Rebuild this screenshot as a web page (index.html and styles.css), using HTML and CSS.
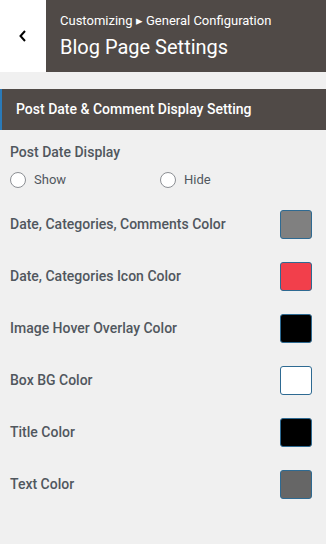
FILE: index.html
```html
<!DOCTYPE html>
<html lang="en">
<head>
    <meta charset="UTF-8">
    <meta name="viewport" content="width=device-width, initial-scale=1.0">
    <title>Blog Page Settings</title>
    <link rel="stylesheet" href="styles.css">
</head>
<body>
    <div class="panel-header">
        <button class="back-btn" type="button">
            <svg width="12" height="14" viewBox="0 0 12 14"><path d="M8 2 L3.5 7 L8 12" fill="none" stroke="#000" stroke-width="2"/></svg>
        </button>
        <div class="panel-title">
            <div class="crumb">Customizing &#9656; General Configuration</div>
            <h1>Blog Page Settings</h1>
        </div>
    </div>

    <div class="section-title">Post Date &amp; Comment Display Setting</div>

    <div class="controls">
        <div class="control">
            <div class="control-label">Post Date Display</div>
            <div class="radio-row">
                <label class="radio"><span class="circle"></span>Show</label>
                <label class="radio"><span class="circle"></span>Hide</label>
            </div>
        </div>
        <div class="color-row">
            <span>Date, Categories, Comments Color</span>
            <span class="swatch" style="background:#808080"></span>
        </div>
        <div class="color-row">
            <span>Date, Categories Icon Color</span>
            <span class="swatch" style="background:#f23f4b"></span>
        </div>
        <div class="color-row">
            <span>Image Hover Overlay Color</span>
            <span class="swatch" style="background:#000000"></span>
        </div>
        <div class="color-row">
            <span>Box BG Color</span>
            <span class="swatch" style="background:#ffffff"></span>
        </div>
        <div class="color-row">
            <span>Title Color</span>
            <span class="swatch" style="background:#000000"></span>
        </div>
        <div class="color-row">
            <span>Text Color</span>
            <span class="swatch" style="background:#666666"></span>
        </div>
    </div>
</body>
</html>
```

FILE: styles.css
```css
body {
    margin: 0;
    font-family: Roboto, "Noto Sans", sans-serif;
    background-color: #f0f0f0;
    color: #50575e;
    width: 326px;
    height: 544px;
    overflow: hidden;
}

.panel-header {
    display: flex;
    height: 72px;
}

    .panel-header .back-btn {
        width: 46px;
        border: none;
        background-color: #fff;
        display: flex;
        align-items: center;
        justify-content: center;
        padding: 0;
        padding-bottom: 1px;
    }

    .panel-header .panel-title {
        flex: 1;
        background-color: #504a47;
        color: #fff;
        padding: 13px 0 0 14px;
    }

    .panel-title .crumb {
        font-size: 13px;
        line-height: 16px;
    }

    .panel-title h1 {
        margin: 6px 0 0;
        font-size: 20px;
        font-weight: 400;
        line-height: 24px;
    }

.section-title {
    margin-top: 17px;
    height: 41px;
    box-sizing: border-box;
    background-color: #504a47;
    border-left: 2px solid #2a7ab8;
    color: #fff;
    font-size: 14px;
    font-weight: 500;
    line-height: 41px;
    padding-left: 14px;
}

.controls {
    padding: 13px 14px 0 10px;
}

.control {
    margin-bottom: 10px;
}

.control-label {
    font-size: 14px;
    font-weight: 500;
    line-height: 18px;
}

.radio-row {
    display: flex;
    margin-top: 11px;
}

    .radio-row .radio {
        width: 150px;
        display: flex;
        align-items: center;
        font-size: 13px;
        line-height: 16px;
    }

    .radio .circle {
        width: 14px;
        height: 14px;
        border: 1px solid #8c8f94;
        border-radius: 50%;
        background-color: #fff;
        margin-right: 8px;
    }

.color-row {
    display: flex;
    justify-content: space-between;
    align-items: center;
    height: 52px;
    font-size: 14px;
    font-weight: 500;
}

.swatch {
    width: 30px;
    height: 27px;
    border: 1px solid #2e6a92;
    border-radius: 3px;
}
```
